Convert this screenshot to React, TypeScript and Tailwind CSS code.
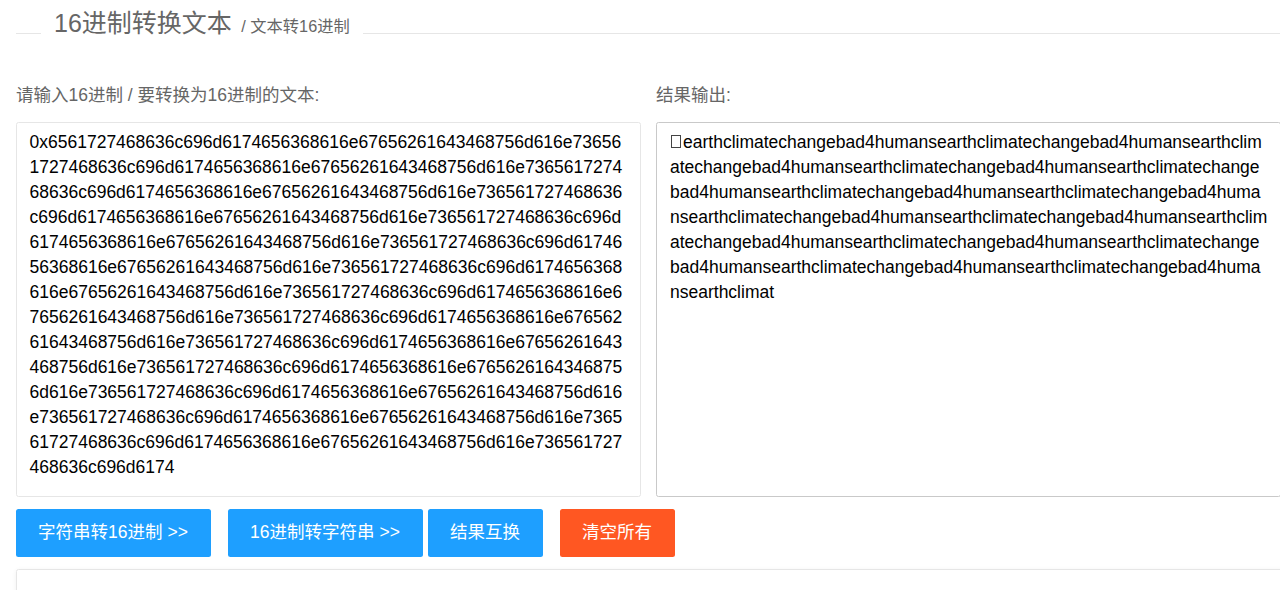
import clsx from "clsx";

const PHRASE = "earthclimatechangebad4humans";
const PHRASE_HEX = "6561727468636c696d6174656368616e67656261643468756d616e73";

const input = "0x" + PHRASE_HEX.repeat(14) + "6561727468636c696d6174";
const output = PHRASE.repeat(14) + "earthclimat";

interface ButtonItem {
  title: string;
  className: string;
}

const buttons: ButtonItem[] = [
  { title: "字符串转16进制 >>", className: "w-[195px] bg-[#1e9fff]" },
  { title: "16进制转字符串 >>", className: "w-[195px] ml-[17px] bg-[#1e9fff]" },
  { title: "结果互换", className: "w-[115px] ml-[5px] bg-[#1e9fff]" },
  { title: "清空所有", className: "w-[115px] ml-[17px] bg-[#ff5722]" },
];

function Title() {
  return (
    <div className="flex flex-row h-[66px] pl-4">
      <div className="mt-[33px] h-px w-[25px] bg-[#e6e6e6]" />
      <h1 className="flex h-[46px] items-baseline whitespace-pre pr-[13px] pl-[13px] text-[25px] leading-[46px] text-[#666]">
        16进制转换文本
        <span className="pl-[9.5px] text-[16.25px]">/ 文本转16进制</span>
      </h1>
      <div className="mt-[33px] h-px grow bg-[#e6e6e6]" />
    </div>
  );
}

function Panel({
  label,
  className,
  children,
}: Readonly<{
  label: string;
  className?: string;
  children: React.ReactNode;
}>) {
  return (
    <div className="flex w-[625px] shrink-0 flex-col">
      <label className="h-14 pt-[17px] leading-[25px] text-[#666]">{label}</label>
      <div
        className={clsx(
          "h-[375px] overflow-hidden rounded-[2.5px] border pt-[6.5px] leading-[25px] break-all text-black",
          className,
        )}
      >
        {children}
      </div>
    </div>
  );
}

export default function App() {
  return (
    <main className="h-[590px] w-full overflow-hidden bg-white font-['Liberation_Sans','Noto_Sans_CJK_SC',sans-serif] text-[17.5px]">
      <Title />
      <div className="flex flex-row gap-[15px] pl-4">
        <Panel label="请输入16进制 / 要转换为16进制的文本:" className="border-[#e6e6e6] px-[12.5px]">
          {input}
        </Panel>
        <Panel label="结果输出:" className="border-[#c9c9c9] pl-[13px] pr-[11px]">
          {/* unprintable leading character */}
          <span className="mr-[2px] ml-px inline-block h-[13px] w-[10px] border border-[#444] align-baseline" />
          {output}
        </Panel>
      </div>
      <div className="flex flex-row pt-3 pl-4">
        {buttons.map((item) => (
          <button
            key={item.title}
            className={clsx(
              "h-12 rounded-[2.5px] pr-px pb-[2px] text-center whitespace-nowrap text-white",
              item.className,
            )}
          >
            {item.title}
          </button>
        ))}
      </div>
      <div className="mt-3 ml-4 h-20 w-[1300px] rounded-[2.5px] border border-[#e6e6e6] shadow-[0_1px_5px_rgba(0,0,0,0.06)]" />
    </main>
  );
}
